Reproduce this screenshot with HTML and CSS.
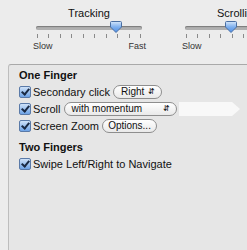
FILE: index.html
```html
<!DOCTYPE html>
<html lang="en">
<head>
  <meta charset="UTF-8">
  <title>Trackpad</title>
  <link rel="stylesheet" href="styles.css">
</head>
<body>
  <div class="sliders">
    <div class="slider">
      <div class="slider-title">Tracking</div>
      <div class="track">
        <svg class="thumb" style="left: 74px" width="12" height="12" viewBox="0 0 12 12">
          <defs>
            <linearGradient id="tg1" x1="0" y1="0" x2="0" y2="1">
              <stop offset="0" stop-color="#d4e6fb"/>
              <stop offset="0.5" stop-color="#7fb0ee"/>
              <stop offset="1" stop-color="#4d8ee6"/>
            </linearGradient>
          </defs>
          <path d="M1.5 0.5 H10.5 Q11.5 0.5 11.5 1.5 V6 L6 11.5 L0.5 6 V1.5 Q0.5 0.5 1.5 0.5 Z" fill="url(#tg1)" stroke="#4a6fa3"/>
        </svg>
      </div>
      <div class="ticks">
        <i></i><i></i><i></i><i></i><i></i><i></i><i></i><i></i><i></i><i></i>
      </div>
      <div class="ends"><span>Slow</span><span>Fast</span></div>
    </div>
    <div class="slider">
      <div class="slider-title">Scrolling</div>
      <div class="track">
        <svg class="thumb" style="left: 40px" width="12" height="12" viewBox="0 0 12 12">
          <defs>
            <linearGradient id="tg2" x1="0" y1="0" x2="0" y2="1">
              <stop offset="0" stop-color="#d4e6fb"/>
              <stop offset="0.5" stop-color="#7fb0ee"/>
              <stop offset="1" stop-color="#4d8ee6"/>
            </linearGradient>
          </defs>
          <path d="M1.5 0.5 H10.5 Q11.5 0.5 11.5 1.5 V6 L6 11.5 L0.5 6 V1.5 Q0.5 0.5 1.5 0.5 Z" fill="url(#tg2)" stroke="#4a6fa3"/>
        </svg>
      </div>
      <div class="ticks">
        <i></i><i></i><i></i><i></i><i></i><i></i><i></i><i></i><i></i><i></i>
      </div>
      <div class="ends"><span>Slow</span></div>
    </div>
  </div>

  <div class="panel">
    <div class="group-title">One Finger</div>
    <div class="option">
      <span class="check"></span><span class="label">Secondary click</span>
      <span class="popup">Right <span class="arrows">&#8693;</span></span>
    </div>
    <div class="option selected">
      <span class="check"></span><span class="label">Scroll</span>
      <span class="popup wide">with momentum <span class="arrows">&#8693;</span></span>
      <span class="marker"></span>
    </div>
    <div class="option">
      <span class="check"></span><span class="label">Screen Zoom</span>
      <span class="button">Options...</span>
    </div>
    <div class="group-title second">Two Fingers</div>
    <div class="option">
      <span class="check"></span><span class="label">Swipe Left/Right to Navigate</span>
    </div>
  </div>
</body>
</html>
```

FILE: styles.css
```css
body { margin: 0; width: 247px; height: 250px; overflow: hidden; background: #ececec; font-family: "Liberation Sans", Arial, sans-serif; font-size: 11px; color: #111; }

.sliders { display: flex; gap: 43px; padding: 6px 0 0 36px; width: 400px; }
.slider { width: 106px; flex: none; }
.slider-title { text-align: center; font-size: 11px; height: 14px; line-height: 14px; white-space: nowrap; }
.track { position: relative; height: 4px; margin-top: 6px; background: #b0b0b0; border-radius: 2px; box-shadow: inset 0 1px 1px #7a7a7a; }
.thumb { position: absolute; top: -5px; }
.ticks { display: flex; justify-content: space-between; margin-top: 4px; padding: 0 1px; height: 4px; }
.ticks i { width: 1px; height: 4px; background: #8a8a8a; }
.ends { display: flex; justify-content: space-between; font-size: 9px; color: #333; margin: 3px -4px 0 -3px; }

.panel { margin: 13px 0 0 8px; width: 300px; height: 200px; background: #e6e6e6; border: 1px solid #bdbdbd; border-top-color: #a9a9a9; border-radius: 3px 0 0 0; padding: 3px 0 0 10px; }
.group-title { font-weight: bold; height: 15px; line-height: 15px; }
.group-title.second { margin-top: 6px; }
.option { position: relative; display: flex; align-items: center; height: 17px; white-space: nowrap; }
.check { flex: none; width: 10px; height: 10px; margin-right: 2px; border: 1px solid #5a7aa8; border-radius: 2px; background: linear-gradient(#cfe2f8, #6ea3e6); position: relative; }
.check::after { content: ""; position: absolute; left: 3px; top: 0; width: 3px; height: 6px; border: solid #1a2a44; border-width: 0 2px 2px 0; transform: rotate(40deg); }
.label { margin-right: 3px; }
.popup, .button { display: inline-flex; align-items: center; justify-content: space-between; box-sizing: border-box; height: 14px; padding: 0 6px 0 7px; border: 1px solid #8e8e8e; border-radius: 7px; background: linear-gradient(#ffffff, #e9e9e9); font-size: 10px; }
.popup { width: 49px; }
.popup.wide { width: 113px; position: relative; z-index: 1; }
.arrows { font-size: 8px; }
.button { width: 55px; padding: 0 6px; justify-content: center; }
.marker { position: absolute; left: 160px; top: 2px; width: 61px; height: 14px; background: #f8f8f8; clip-path: polygon(0 0, 87% 0, 100% 50%, 87% 100%, 0 100%); }
```
